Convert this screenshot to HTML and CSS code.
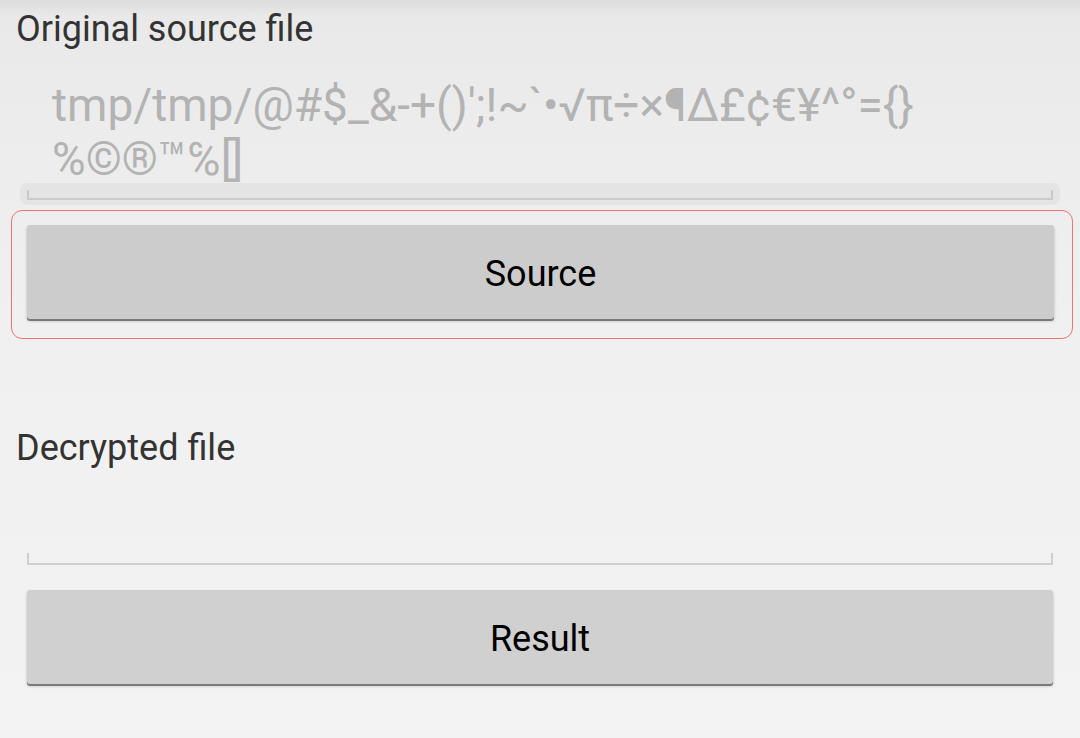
FILE: index.html
```html
<!DOCTYPE html>
<html>
<head>
<meta charset="utf-8">
<link rel="stylesheet" href="styles.css">
</head>
<body>
<div class="screen">
  <div class="label first">Original source file</div>
  <div class="hint">tmp/tmp/@#$_&amp;-+()';!~`•√π÷×¶∆£¢€¥^°={}<br>%©®™℅<span class="box">[]</span></div>
  <div class="band"><div class="line"></div></div>
  <div class="focus">
    <button class="btn">Source</button>
  </div>
  <div class="label second">Decrypted file</div>
  <div class="underline"></div>
  <button class="btn result">Result</button>
</div>
</body>
</html>
```
FILE: styles.css
```css
html, body {
  margin: 0;
  padding: 0;
  height: 100%;
}
body {
  background: linear-gradient(to bottom, #dcdcdc 0px, #e9e9e9 16px, #ececec 120px, #f0f0f0 330px, #f3f3f3 738px);
  font-family: Roboto, "Noto Sans", sans-serif;
  width: 1080px;
  height: 738px;
  overflow: hidden;
}
.screen {
  display: flex;
  flex-direction: column;
  padding-top: 8px;
}
.label {
  font-size: 36px;
  line-height: 42px;
  color: #333333;
  padding-left: 16px;
}
.hint {
  margin-top: 28px;
  padding-left: 52px;
  font-size: 46px;
  line-height: 54px;
  color: #b3b3b3;
  white-space: nowrap;
}
.box {
  letter-spacing: -2px;
}
.band {
  margin: -3px 20px 0 20px;
  height: 22px;
  background: #e4e4e4;
  border-radius: 7px;
  padding: 7px 7px 0 7px;
  box-sizing: border-box;
}
.line {
  height: 8px;
  border-left: 2px solid #cacaca;
  border-right: 2px solid #cacaca;
  border-bottom: 2px solid #cacaca;
}
.focus {
  margin: 5px 7px 0 11px;
  border: 1.5px solid #f27373;
  border-radius: 11px;
  padding: 14px 18px 19px 15px;
}
.btn {
  display: block;
  width: 100%;
  height: 94px;
  border: none;
  border-radius: 3px;
  background: #cccccc;
  box-shadow: 0 2px 0 #7a7a7a, 0 2px 3px rgba(0,0,0,0.25);
  font-family: Roboto, "Noto Sans", sans-serif;
  font-size: 36px;
  color: #000000;
  padding: 4px 0 0 0;
}
.second {
  margin-top: 88px;
}
.underline {
  margin: 84px 27px 0 27px;
  height: 10px;
  border-left: 2px solid #cfcfcf;
  border-right: 2px solid #cfcfcf;
  border-bottom: 2px solid #cfcfcf;
}
.result {
  margin: 25px 27px 0 27px;
  width: auto;
  height: 94px;
  background: #d0d0d0;
}
```
